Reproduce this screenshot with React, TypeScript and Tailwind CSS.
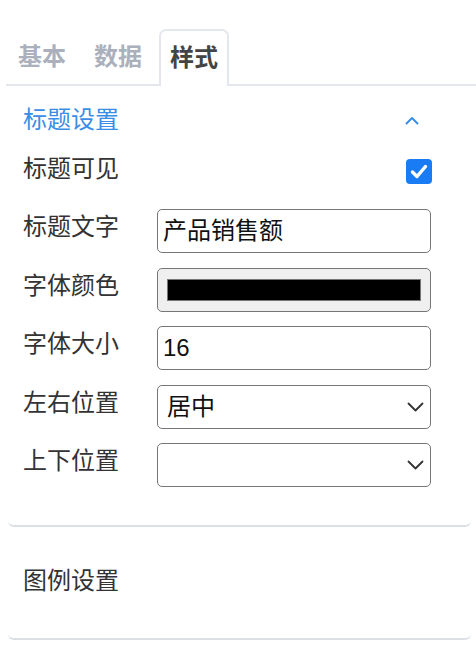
import React from "react";

const font = { fontFamily: "'Liberation Sans', 'Noto Sans CJK SC', sans-serif" };

function ChevronDown() {
  return (
    <svg width="17" height="10" viewBox="0 0 17 10" fill="none">
      <path d="M1.5 1.5 L8.5 8.5 L15.5 1.5" stroke="#333333" strokeWidth="1.8" strokeLinecap="round" strokeLinejoin="round" />
    </svg>
  );
}

function ChevronUp() {
  return (
    <svg width="14" height="9" viewBox="0 0 14 9" fill="none">
      <path d="M1.5 7.5 L7 2 L12.5 7.5" stroke="#3a8ee6" strokeWidth="2" strokeLinecap="round" strokeLinejoin="round" />
    </svg>
  );
}

function Row({ label, children }: { label: string; children: React.ReactNode }) {
  return (
    <div className="flex h-[44px] items-start">
      <div className="w-[134px] shrink-0 text-[24px] leading-[36px] text-[#333]">{label}</div>
      <div className="flex-1">{children}</div>
    </div>
  );
}

export default function App() {
  const tabs = ["基本", "数据", "样式"];
  const active = 2;

  return (
    <div className="h-[670px] w-[476px] overflow-hidden bg-white pt-[29px]" style={font}>
      {/* Tabs */}
      <div className="ml-[6px] flex items-start gap-[6px] border-b-2 border-[#e4e7ed] pl-px">
        {tabs.map((t, i) => (
          <div
            key={t}
            className={
              i === active
                ? "-mb-[2px] flex h-[57px] items-center rounded-t-[7px] border-2 border-b-0 border-[#e4e7ed] bg-white px-[9px] pb-[2px] text-[24px] font-bold text-[#444]"
                : "flex h-[55px] items-center border-2 border-transparent px-[9px] text-[24px] font-bold text-[#aab0bc]"
            }
          >
            {t}
          </div>
        ))}
      </div>

      {/* 标题设置 */}
      <div className="ml-[8px] mr-[5px] rounded-b-[6px] border-b-2 border-[#dcdfe6] pb-[38px] pl-[15px] pr-[40px] pt-[16px]">
        <div className="flex items-center justify-between">
          <span className="text-[24px] leading-[36px] text-[#3a8ee6]">标题设置</span>
          <span className="mr-[12px] flex">
            <ChevronUp />
          </span>
        </div>

        <div className="mt-[12.5px] flex flex-col gap-[14.5px]">
          <div className="flex h-[44px] items-start justify-between">
            <span className="text-[24px] leading-[36px] text-[#333]">标题可见</span>
            <div className="mr-[-1px] mt-[8.5px] flex h-[25px] w-[26px] items-center justify-center rounded-[4px] bg-[#1a7cf5]">
              <svg width="18" height="15" viewBox="0 0 18 15" fill="none">
                <path d="M2.5 8 L7 12.5 L15.5 2.5" stroke="white" strokeWidth="3.4" strokeLinecap="round" strokeLinejoin="round" />
              </svg>
            </div>
          </div>

          <Row label="标题文字">
            <div className="flex h-[44px] items-center rounded-[5px] border-[1.5px] border-[#767676] pl-[5px] text-[24px] text-[#111]">
              产品销售额
            </div>
          </Row>

          <Row label="字体颜色">
            <div className="flex h-[44px] items-center rounded-[5px] border-[1.5px] border-[#767676] bg-[#efefef] px-[9px]">
              <div className="h-[22px] w-full border-[1.5px] border-[#767676] bg-black" />
            </div>
          </Row>

          <Row label="字体大小">
            <div className="flex h-[44px] items-center rounded-[5px] border-[1.5px] border-[#767676] pl-[5px] text-[24px] text-[#111]">
              16
            </div>
          </Row>

          <Row label="左右位置">
            <div className="flex h-[44px] items-center justify-between rounded-[5px] border-[1.5px] border-[#767676] pl-[9px] pr-[6px] text-[24px] text-[#111]">
              <span>居中</span>
              <ChevronDown />
            </div>
          </Row>

          <Row label="上下位置">
            <div className="flex h-[44px] items-center justify-end rounded-[5px] border-[1.5px] border-[#767676] pr-[6px]">
              <ChevronDown />
            </div>
          </Row>
        </div>
      </div>

      {/* 图例设置 */}
      <div className="ml-[8px] mr-[5px] rounded-b-[6px] border-b-2 border-[#dcdfe6] pb-[39px] pl-[15px] pt-[36px]">
        <span className="text-[24px] leading-[36px] text-[#333]">图例设置</span>
      </div>
    </div>
  );
}
